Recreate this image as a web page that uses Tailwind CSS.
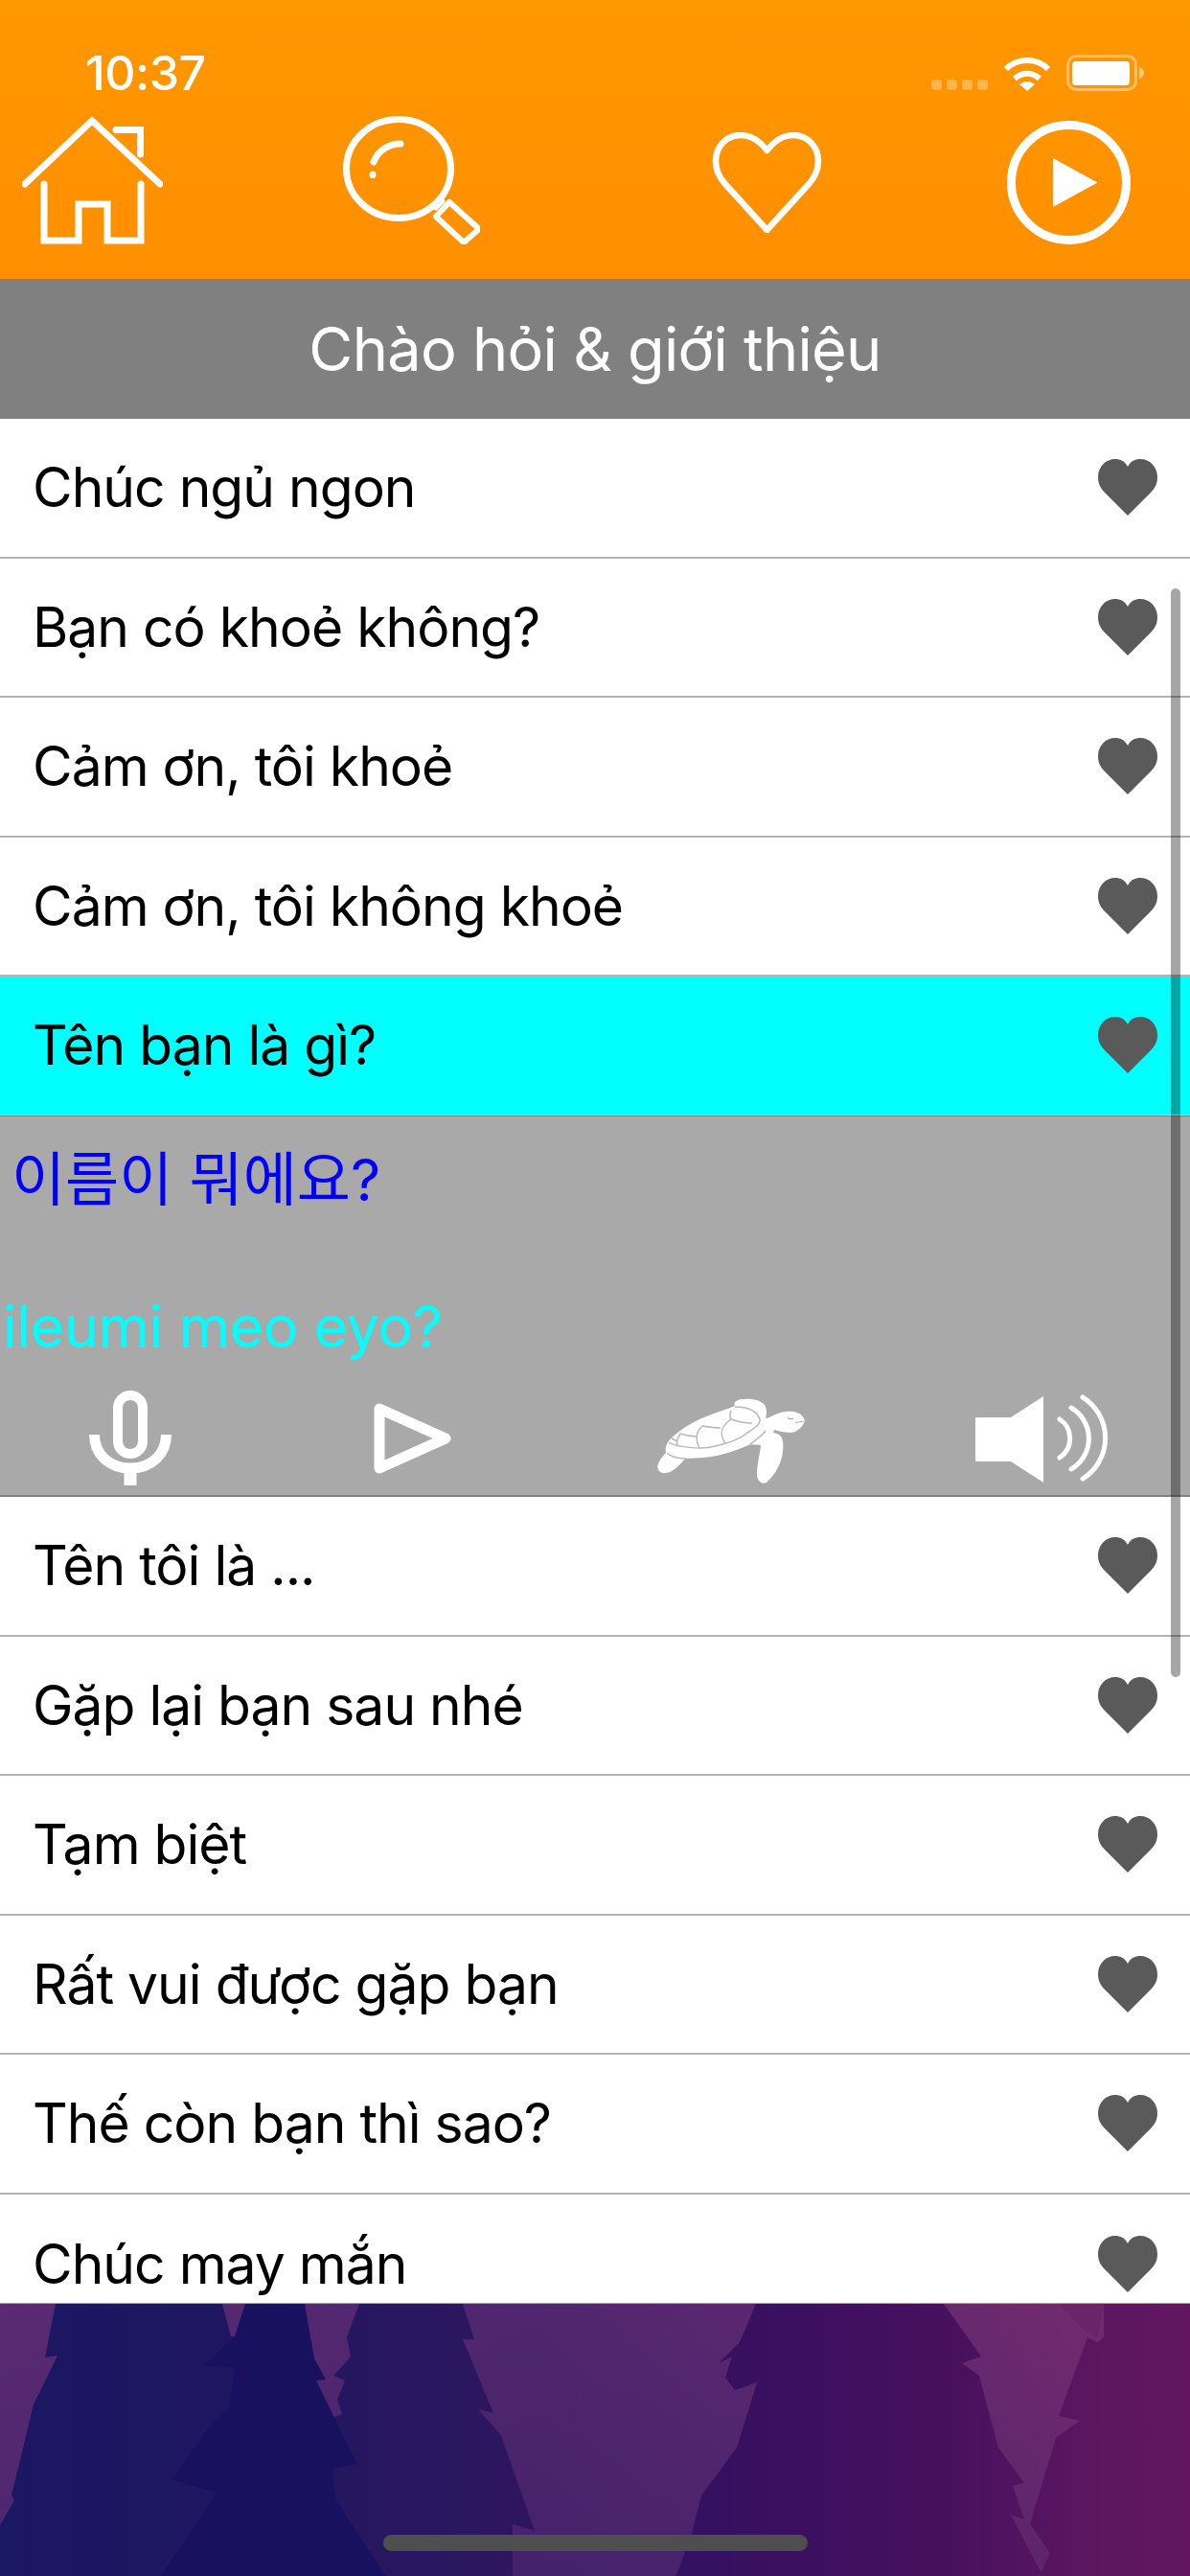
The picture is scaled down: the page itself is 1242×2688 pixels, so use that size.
<!DOCTYPE html>
<html lang="en">
<head>
    <meta charset="UTF-8">
    <meta name="viewport" content="width=device-width, initial-scale=1.0">
    <title>Chào hỏi</title>
    <script src="https://cdn.jsdelivr.net/npm/@tailwindcss/browser@4"></script>
</head>
<body class="bg-white font-[Inter,'Noto_Sans_CJK_KR',sans-serif]">
<svg class="hidden">
    <symbol id="fav" viewBox="0 0 62 59"><path fill="#5a5a5a" d="M31 59 7 35C2 30 0 25 0 19 0 8 8 0 18 0c5 0 10 2 13 8 3-6 8-8 13-8 10 0 18 8 18 19 0 6-2 11-7 16z"/></symbol>
</svg>
<div class="relative w-[1242px] h-[2688px] overflow-hidden flex flex-col">
    <!-- top bar -->
    <header class="h-[291px] shrink-0 bg-[linear-gradient(180deg,#ff9700,#ff8f00)] relative">
        <div class="h-[120px] flex items-start justify-between pl-[89px] pr-[47px] pt-[50px] text-white">
            <span class="text-[50px] leading-[52px] font-medium tracking-[-0.5px]">10:37</span>
            <div class="flex items-end gap-[16px] pt-[7px]">
                <div class="flex gap-[5px] pb-[1px]">
                    <i class="block w-[11px] h-[11px] rounded-[4px] bg-white/30"></i><i class="block w-[11px] h-[11px] rounded-[4px] bg-white/30"></i><i class="block w-[11px] h-[11px] rounded-[4px] bg-white/30"></i><i class="block w-[11px] h-[11px] rounded-[4px] bg-white/30"></i>
                </div>
                <svg width="50" height="38" viewBox="0 0 50 38" fill="none" stroke="#fff"><path stroke-width="6" d="M3 15C15 3 35 3 47 15"/><path stroke-width="6" d="M12 25c8-7 18-7 26 0"/><path fill="#fff" stroke="none" d="M17 31c5-4 11-4 16 0l-8 7z"/></svg>
                <svg width="82" height="38" viewBox="0 0 82 38"><rect x="1.500" y="1.500" width="71" height="35" rx="9" fill="none" stroke="#fff" stroke-opacity=".4" stroke-width="3"/><rect x="6" y="7" width="60" height="25" rx="4" fill="#fff"/><path fill="#fff" fill-opacity=".5" d="M76 13c3 1 5 3 5 6s-2 5-5 6z"/></svg>
            </div>
        </div>
        <nav class="flex items-end pl-[23px] h-[135px]">
            <svg width="147" height="134" viewBox="0 0 147 134" fill="none" stroke="#fff" stroke-width="7"><path stroke-linecap="round" d="M3 71 73 5l71 66"/><path stroke-linecap="round" d="M98 14.500h25.500V40"/><path stroke-linecap="round" d="M23 71v59h36V92h30v38h35V71"/></svg>
            <svg class="ml-[188px]" width="143" height="134" viewBox="0 0 143 134" fill="none" stroke="#fff" stroke-width="7" stroke-linecap="round" stroke-linejoin="round"><ellipse cx="58" cy="55" rx="54.500" ry="51.500"/><path d="M32 48c4-11 15-19 28-19"/><path d="M31 61v.5"/><path stroke-width="5" d="m97 96 7-7"/><path stroke-width="6" d="m97 105 29 27 16-14-31-28z"/></svg>
            <svg class="mb-[12px] ml-[242px]" width="115" height="105" viewBox="0 0 115 105" fill="none" stroke="#fff" stroke-width="6.500" stroke-linejoin="round"><path d="M57.500 102 13 53C7 46 4 40 4 30 4 14 16 3 30 3c12 0 20 6 27.500 16C65 9 73 3 85 3c14 0 26 11 26 27 0 10-3 16-9 23z"/></svg>
            <svg class="ml-[193px]" width="129" height="129" viewBox="0 0 129 129"><circle cx="64.500" cy="64.500" r="60" fill="none" stroke="#fff" stroke-width="9"/><path fill="#fff" d="M48 39 94.500 64.500 48 90z"/></svg>
        </nav>
    </header>

    <div class="h-[146px] shrink-0 bg-[#808080] text-white text-[63px] tracking-[-0.7px] flex items-center justify-center">Chào hỏi &amp; giới thiệu</div>

    <main class="flex-1 overflow-hidden relative">
        <div class="h-[145.5px] border-b-2 border-[#b4b4b4] flex items-center justify-between px-[34px] text-[57px] tracking-[-1px] text-black"><span>Chúc ngủ ngon</span><svg width="62" height="59"><use href="#fav"/></svg></div>
        <div class="h-[145.5px] border-b-2 border-[#b4b4b4] flex items-center justify-between px-[34px] text-[57px] tracking-[-1px] text-black"><span>Bạn có khoẻ không?</span><svg width="62" height="59"><use href="#fav"/></svg></div>
        <div class="h-[145.5px] border-b-2 border-[#b4b4b4] flex items-center justify-between px-[34px] text-[57px] tracking-[-1px] text-black"><span>Cảm ơn, tôi khoẻ</span><svg width="62" height="59"><use href="#fav"/></svg></div>
        <div class="h-[145.5px] border-b-2 border-[#b4b4b4] flex items-center justify-between px-[34px] text-[57px] tracking-[-1px] text-black"><span>Cảm ơn, tôi không khoẻ</span><svg width="62" height="59"><use href="#fav"/></svg></div>
        <div class="h-[144.5px] border-b border-white bg-[#00ffff] flex items-center justify-between px-[34px] text-[57px] tracking-[-1px] text-black"><span>Tên bạn là gì?</span><svg width="62" height="59"><use href="#fav"/></svg></div>

        <!-- expanded row -->
        <section class="h-[398.5px] bg-[#a9a9a9] border-t border-b-2 border-t-[#808080] border-b-[#808080]">
            <p class="pl-[12px] pt-[26px] text-[61px] leading-[80px] text-[#0000ff]">이름이 뭐에요?</p>
            <p class="pl-[3px] pt-[73px] text-[61px] leading-[80px] tracking-[-0.4px] text-[#00ffff]">ileumi meo eyo?</p>
            <div class="flex items-center pl-[93px] mt-[22px]">
                <svg width="86" height="99" viewBox="0 0 86 99" fill="none" stroke="#fff"><rect x="30" y="5" width="26" height="61" rx="13" stroke-width="10"/><path stroke-width="11" d="M5.500 46c0 21 16 35 37.500 35s37.500-14 37.500-35"/><path stroke-width="13" d="M43 81v18"/></svg>
                <svg class="ml-[211px]" width="81" height="74" viewBox="0 0 81 74" fill="none" stroke="#fff" stroke-width="11" stroke-linejoin="round"><path d="M6 6v62l69-31z"/></svg>
                <svg class="ml-[199px]" width="190" height="110" viewBox="0 0 190 110" fill="#fff">
                    <path d="M97 21c-2-4 2-7 10-7 8-1 17 1 21 6 3 5 2 10 1 14 6-1 11-6 21-7 9-1 17 1 20 9-1 5-5 9-10 12-7 2-15 0-22-2l-1 3c6 1 9 3 10 9 2 16-5 32-17 43-4 2-9 0-10-8 0-11 3-21 4-31-3-1-7 0-11-1C97 69 78 74 64 75L45 76C40 82 33 90 25 91 18 92 15 87 17 81 19 77 22 73 25 70 24 66 25 62 27 59 35 48 55 36 70 31 80 27 90 24 97 21z"/>
                    <g fill="none" stroke="#b8b8b8" stroke-width="1.500">
                        <path d="M28 59C35 64 62 67 77 63 90 60 102 56 110 49 118 44 124 40 123 35 120 26 110 22 97 22"/>
                        <path d="M26 70C30 74 38 76 46 76"/>
                        <path d="M113 61C120 56 125 52 129 47"/>
                        <path d="M87 60c-6-9-6-17 6-25M93 35c8 3 15 4 22 4M93 35c-2-3-1-6 0-9M82 44c-7 0-13-1-19-2M63 42c-6 5-8 14-3 23M40 50c6 2 11 3 17 3M40 50c-3 4-4 8-3 12M31 55c2 1 4 2 6 3"/>
                    </g>
                    <path fill="none" stroke="#a9a9a9" stroke-width="1.200" d="M152 33c1 2 4 2 6 1M160 39c3-1 6-2 9-2"/>
                </svg>
                <svg class="ml-[158px]" width="140" height="92" viewBox="0 0 140 92" fill="none"><path fill="#fff" d="M0 24h37L71 2v90L37 70H0z"/><g stroke="#fff" stroke-width="5" stroke-linecap="round"><path d="M88 26A24 24 0 0 1 88 66"/><path d="M100 14A37 37 0 0 1 100 78"/><path d="M112 3A50 50 0 0 1 112 88"/></g></svg>
            </div>
        </section>

        <div class="h-[145.5px] border-b-2 border-[#b4b4b4] flex items-center justify-between px-[34px] text-[57px] tracking-[-1px] text-black"><span>Tên tôi là ...</span><svg width="62" height="59"><use href="#fav"/></svg></div>
        <div class="h-[145.5px] border-b-2 border-[#b4b4b4] flex items-center justify-between px-[34px] text-[57px] tracking-[-1px] text-black"><span>Gặp lại bạn sau nhé</span><svg width="62" height="59"><use href="#fav"/></svg></div>
        <div class="h-[145.5px] border-b-2 border-[#b4b4b4] flex items-center justify-between px-[34px] text-[57px] tracking-[-1px] text-black"><span>Tạm biệt</span><svg width="62" height="59"><use href="#fav"/></svg></div>
        <div class="h-[145.5px] border-b-2 border-[#b4b4b4] flex items-center justify-between px-[34px] text-[57px] tracking-[-1px] text-black"><span>Rất vui được gặp bạn</span><svg width="62" height="59"><use href="#fav"/></svg></div>
        <div class="h-[145.5px] border-b-2 border-[#b4b4b4] flex items-center justify-between px-[34px] text-[57px] tracking-[-1px] text-black"><span>Thế còn bạn thì sao?</span><svg width="62" height="59"><use href="#fav"/></svg></div>
        <div class="h-[145.5px] flex items-center justify-between px-[34px] text-[57px] tracking-[-1px] text-black"><span>Chúc may mắn</span><svg width="62" height="59"><use href="#fav"/></svg></div>

        <!-- scroll thumb -->
        <div class="absolute left-[1222px] top-[177px] w-[10px] h-[1136px] rounded-full bg-black/35"></div>
    </main>

    <!-- bottom banner -->
    <footer class="h-[285px] shrink-0 relative border-t border-[#9c9cb4]">
        <svg class="block" width="1242" height="285" viewBox="0 0 1242 285">
            <defs>
                <linearGradient id="sky" gradientUnits="userSpaceOnUse" x1="0" y1="0" x2="1242" y2="0">
                    <stop offset="0" stop-color="#5a2a72"/><stop offset=".45" stop-color="#50266e"/><stop offset=".7" stop-color="#5e2870"/><stop offset=".9" stop-color="#722a6e"/><stop offset="1" stop-color="#722a6e"/>
                </linearGradient>
                <linearGradient id="shade" x1="0" y1="0" x2="0" y2="1">
                    <stop offset="0" stop-color="#1a1464" stop-opacity="0"/><stop offset="1" stop-color="#1a1464" stop-opacity=".22"/>
                </linearGradient>
                <linearGradient id="pine" gradientUnits="userSpaceOnUse" x1="0" y1="0" x2="1242" y2="0">
                    <stop offset="0" stop-color="#1a1763"/><stop offset=".2" stop-color="#1f1660"/><stop offset=".4" stop-color="#2c1660"/><stop offset=".6" stop-color="#351060"/><stop offset=".8" stop-color="#48105e"/><stop offset=".92" stop-color="#5c1660"/><stop offset="1" stop-color="#621660"/>
                </linearGradient>
            </defs>
            <rect width="1242" height="285" fill="url(#sky)"/>
            <rect width="1242" height="285" fill="url(#shade)"/>
            <!-- left pine -->
            <path fill="url(#pine)" d="M58 0 47 56 60 54 35 105 12 200 15 205-5 240V285H260V34H241L232 0z"/>
            <!-- third pine -->
            <path fill="url(#pine)" d="M375 0H483l12 37h-12l32 77-16-4 24 27 35 100-23-7v55H345V120l12-5-5-15 8-20-12-5 18-20-4-20z"/>
            <!-- front pine -->
            <path fill="#17115f" d="M256 0h62l10 57 12 22-10 1 23 47 20 40-26 5 3 32 53 81H167l33-48 27-40-47-13 37-54 23-23 5-40-32-3 32-30z"/>
            <!-- right pines -->
            <path fill="url(#pine)" d="M1152 0h90v285h-158l12-25-21-30 27-90 25-18-22-5 30-82 10 5 7-5z"/>
            <path fill="#6b2468" d="M1105 0h47l-7 35-12-6z"/>
            <path fill="url(#pine)" d="M789 0h196l39 55-20 7 18 13 20 75 27 37-12 3 12 35-14-5 34 65H705l17-45 10-40 37-50 21-68-23 8-10-13 7-22-14 7 22-22z"/>
        </svg>
        <div class="absolute left-[400px] top-[241px] w-[443px] h-[17px] rounded-full bg-[#4e4e4e]"></div>
    </footer>
</div>
</body>
</html>
